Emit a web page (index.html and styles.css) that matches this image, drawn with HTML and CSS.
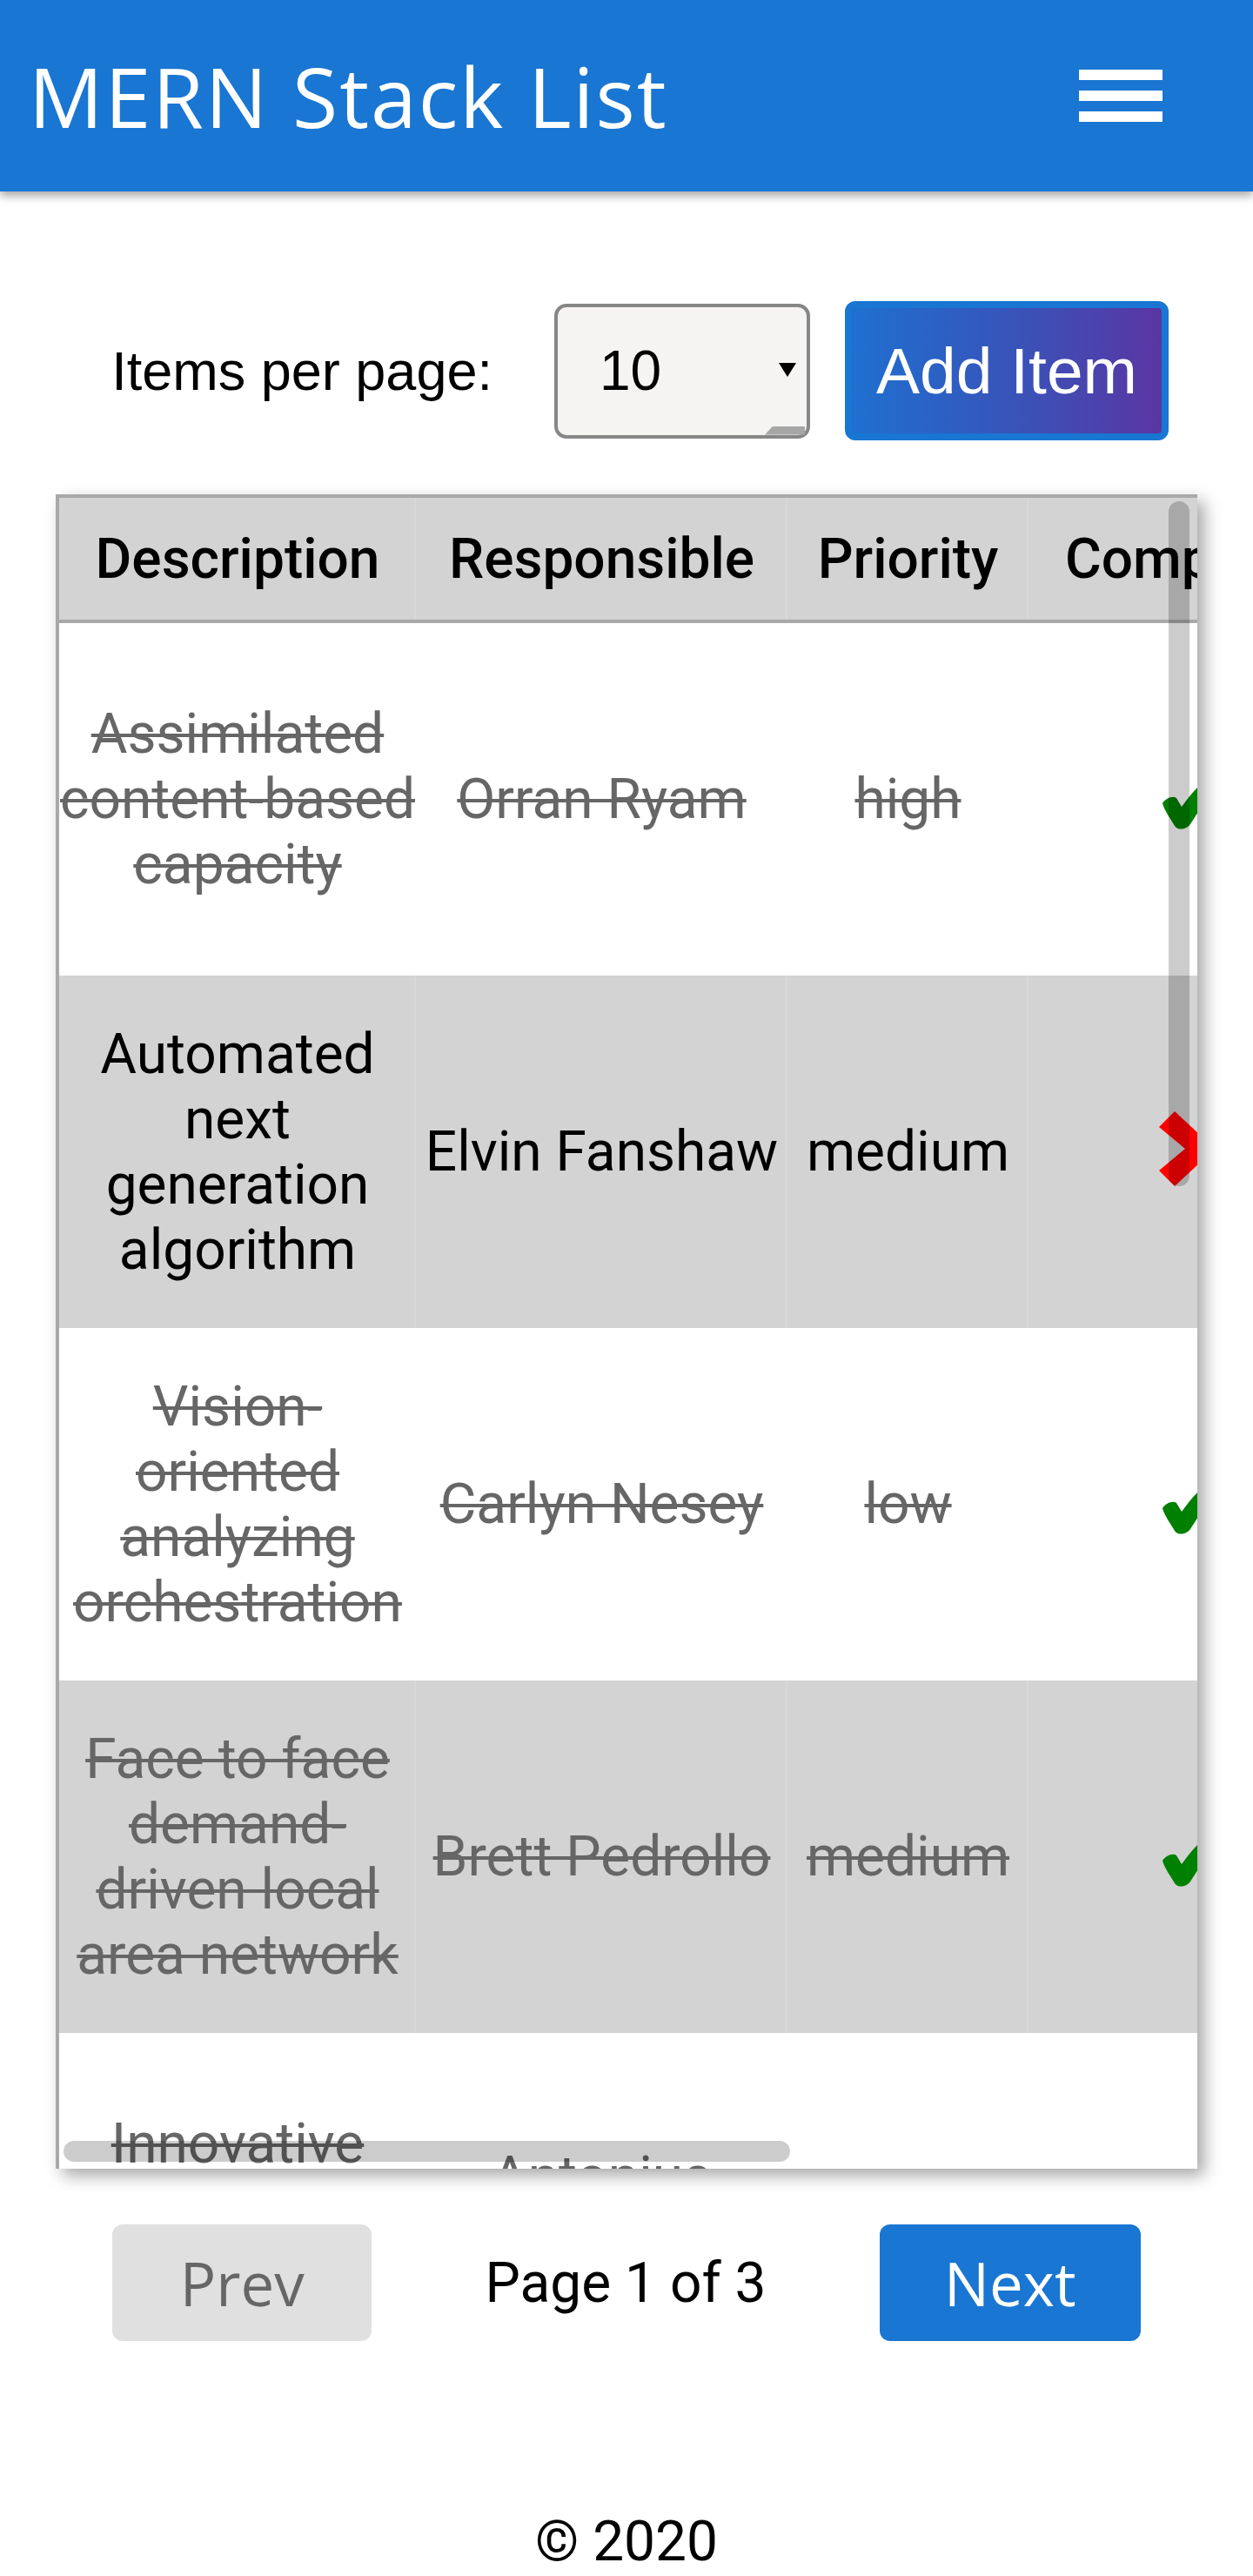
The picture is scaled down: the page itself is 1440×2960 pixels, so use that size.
FILE: index.html
```html
<!DOCTYPE html>
<html lang="en">
<head>
<meta charset="utf-8">
<title>MERN Stack List</title>
<link rel="stylesheet" href="styles.css">
</head>
<body>
<header class="topbar">
  <h1 class="brand">MERN Stack List</h1>
  <div class="burger" aria-label="menu"><span></span><span></span><span></span></div>
</header>

<main class="main">
  <div class="controls">
    <label class="per-page-label" for="perpage">Items per page:</label>
    <div class="select-wrap">
      <select id="perpage" class="select"><option>10</option><option>20</option><option>50</option></select>
      <span class="select-arrow"></span>
      <span class="select-corner"></span>
    </div>
    <button class="add-btn">Add Item</button>
  </div>

  <div class="table-box">
    <table class="todo-table">
      <colgroup>
        <col class="c-desc"><col class="c-resp"><col class="c-prio"><col class="c-comp"><col class="c-act">
      </colgroup>
      <thead>
        <tr><th>Description</th><th>Responsible</th><th>Priority</th><th>Completed</th><th>Actions</th></tr>
      </thead>
      <tbody>
        <tr class="done">
          <td><s>Assimilated content-based capacity</s></td><td><s>Orran Ryam</s></td><td><s>high</s></td>
          <td class="status"><svg class="ico-check" viewBox="0 0 88 76"><path d="M0 46 C4 40 12 37 16 40 L22 50 C36 30 56 10 74 0 C78 2 80 6 78 10 C62 26 44 50 32 70 C28 76 18 78 14 72 C8 62 2 54 0 46 Z" fill="#008000"/></svg></td>
          <td>Edit Delete</td>
        </tr>
        <tr class="open">
          <td>Automated next generation algorithm</td><td>Elvin Fanshaw</td><td>medium</td>
          <td class="status"><svg class="ico-x" viewBox="0 0 96 86"><path d="M0 18 L18 0 L48 28 L78 0 L96 18 L66 43 L96 68 L78 86 L48 58 L18 86 L0 68 L30 43 Z" fill="#ff0000"/></svg></td>
          <td>Edit Delete</td>
        </tr>
        <tr class="done">
          <td><s>Vision-oriented analyzing orchestration</s></td><td><s>Carlyn Nesey</s></td><td><s>low</s></td>
          <td class="status"><svg class="ico-check" viewBox="0 0 88 76"><path d="M0 46 C4 40 12 37 16 40 L22 50 C36 30 56 10 74 0 C78 2 80 6 78 10 C62 26 44 50 32 70 C28 76 18 78 14 72 C8 62 2 54 0 46 Z" fill="#008000"/></svg></td>
          <td>Edit Delete</td>
        </tr>
        <tr class="done">
          <td><s>Face to face demand-driven local area network</s></td><td><s>Brett Pedrollo</s></td><td><s>medium</s></td>
          <td class="status"><svg class="ico-check" viewBox="0 0 88 76"><path d="M0 46 C4 40 12 37 16 40 L22 50 C36 30 56 10 74 0 C78 2 80 6 78 10 C62 26 44 50 32 70 C28 76 18 78 14 72 C8 62 2 54 0 46 Z" fill="#008000"/></svg></td>
          <td>Edit Delete</td>
        </tr>
        <tr class="done">
          <td><s>Innovative client-server approach</s></td><td><s>Antonius Kilmurray</s></td><td><s>high</s></td>
          <td class="status"><svg class="ico-check" viewBox="0 0 88 76"><path d="M0 46 C4 40 12 37 16 40 L22 50 C36 30 56 10 74 0 C78 2 80 6 78 10 C62 26 44 50 32 70 C28 76 18 78 14 72 C8 62 2 54 0 46 Z" fill="#008000"/></svg></td>
          <td>Edit Delete</td>
        </tr>
      </tbody>
    </table>
    <div class="scroll-v"></div>
    <div class="scroll-h"></div>
  </div>

  <nav class="pager">
    <button class="pg-btn pg-prev">Prev</button>
    <span class="pg-info">Page 1 of 3</span>
    <button class="pg-btn pg-next">Next</button>
  </nav>
</main>

<footer class="foot">© 2020</footer>
</body>
</html>
```

FILE: styles.css
```css
* { box-sizing: border-box; }
html, body { margin: 0; padding: 0; background: #fff; }
body { font-family: Roboto, "Liberation Sans", sans-serif; color: #000; }

.topbar {
  height: 220px;
  background: #1976d2;
  display: flex;
  align-items: center;
  justify-content: space-between;
  padding: 0 104px 0 33px;
  box-shadow: 0 5px 10px rgba(0,0,0,0.35);
  position: relative;
}
.brand {
  margin: 0;
  font-family: "Open Sans", sans-serif;
  font-weight: 500;
  font-size: 95px;
  line-height: 1;
  color: #fff;
  letter-spacing: 2px;
}
.burger { display: flex; flex-direction: column; gap: 12px; width: 96px; }
.burger span { display: block; height: 12px; background: #fff; }

.controls {
  display: flex;
  align-items: center;
  justify-content: flex-end;
  padding: 0 97px 0 0;
  margin-top: 126px;
  height: 160px;
}
.per-page-label {
  font-family: "Liberation Sans", Arial, sans-serif;
  font-size: 63px;
  margin-right: 71px;
}
.select-wrap {
  position: relative;
  width: 294px;
  height: 155px;
  margin-right: 40px;
}
.select {
  -webkit-appearance: none;
  appearance: none;
  width: 100%;
  height: 100%;
  border: 4px solid #878787;
  border-radius: 14px;
  background: #f5f4f2;
  font-family: "Liberation Sans", Arial, sans-serif;
  font-size: 64px;
  color: #000;
  padding: 0 0 0 48px;
  margin: 0;
}
.select-arrow {
  position: absolute;
  right: 16px;
  top: 68px;
  width: 0; height: 0;
  border-left: 10px solid transparent;
  border-right: 10px solid transparent;
  border-top: 16px solid #000;
}
.select-corner {
  position: absolute;
  right: 6px;
  bottom: 4px;
  width: 46px;
  height: 10px;
  background: #a6a6a6;
  clip-path: polygon(20% 0, 100% 0, 100% 100%, 0 100%);
}
.add-btn {
  width: 372px;
  height: 160px;
  border: 8px solid #1976d2;
  border-radius: 12px;
  background: linear-gradient(90deg, #1e70d0 0%, #3a52b8 55%, #5a35a3 100%);
  color: #fff;
  font-family: "Liberation Sans", Arial, sans-serif;
  font-size: 75px;
  padding: 0;
}

.table-box {
  position: relative;
  margin: 62px 0 0 64px;
  width: 1312px;
  height: 1924px;
  overflow: hidden;
  box-shadow: 8px 8px 18px rgba(0,0,0,0.35);
  background: #fff;
}
.todo-table {
  border-collapse: separate;
  border-spacing: 0;
  table-layout: fixed;
  width: 2036px;
  border-top: 4px solid #a9a9a9;
  border-left: 4px solid #a9a9a9;
  font-family: Roboto, sans-serif;
  font-size: 64px;
  line-height: 75px;
}
.c-desc { width: 410px; }
.c-resp { width: 427px; }
.c-prio { width: 277px; }
.c-comp { width: 396px; }
.c-act { width: 522px; }
.todo-table th {
  height: 144px;
  background: #d3d3d3;
  font-weight: 500;
  border-bottom: 4px solid #a9a9a9;
  box-shadow: inset -2px 0 0 rgba(255,255,255,0.12);
  padding: 0;
  white-space: nowrap;
  text-align: center;
  vertical-align: middle;
}
.todo-table td {
  height: 405px;
  padding: 0;
  text-align: center;
  vertical-align: middle;
  box-shadow: inset -2px 0 0 rgba(255,255,255,0.12);
}
.todo-table tbody tr:nth-child(even) td { background: #d3d3d3; }
.todo-table tr.done td { color: #666; }
.todo-table s { text-decoration: line-through; text-decoration-thickness: 4px; }
.status svg { display: block; margin: 0 auto; }
.ico-check { width: 88px; height: 76px; position: relative; top: -4px; }
.ico-x { width: 96px; height: 86px; position: relative; top: -4px; }

.scroll-v {
  position: absolute;
  left: 1279px;
  top: 8px;
  width: 24px;
  height: 787px;
  border-radius: 12px;
  background: rgba(0,0,0,0.2);
}
.scroll-h {
  position: absolute;
  left: 9px;
  top: 1892px;
  width: 835px;
  height: 24px;
  border-radius: 12px;
  background: rgba(0,0,0,0.2);
}

.pager {
  display: flex;
  align-items: center;
  justify-content: space-around;
  width: 1312px;
  margin: 64px 0 0 64px;
}
.pg-btn {
  width: 298px;
  height: 134px;
  border: none;
  border-radius: 12px;
  font-family: "Open Sans", sans-serif;
  font-size: 69px;
  padding: 0;
}
.pg-prev { background: #e0e0e0; color: #666; }
.pg-next { background: #1976d2; color: #fff; width: 300px; }
.pg-info { font-family: Roboto, sans-serif; font-size: 64px; }

.foot {
  margin-top: 193px;
  text-align: center;
  font-family: Roboto, sans-serif;
  font-size: 64px;
  line-height: 75px;
}
```
